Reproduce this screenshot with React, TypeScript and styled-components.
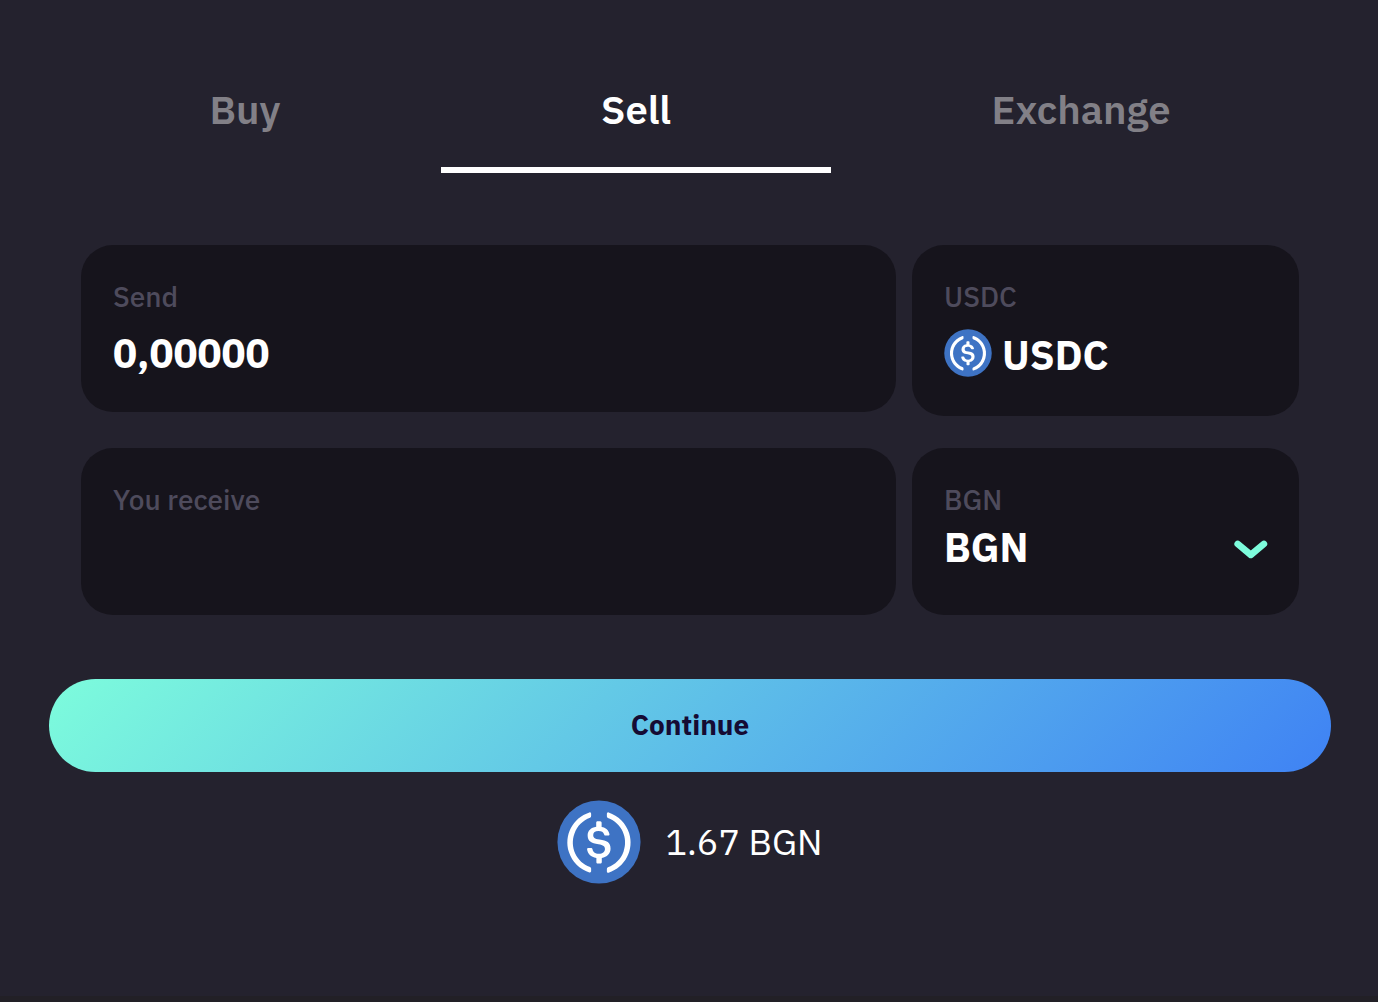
import React, { useState } from "react";
import styled, { createGlobalStyle } from "styled-components";

const GlobalStyle = createGlobalStyle`
  *, *::before, *::after { box-sizing: border-box; }
  html, #root { height: 100%; }
  body {
    height: 100%;
    margin: 0;
    background: #24222e;
    color: #ffffff;
    font-family: "IBM Plex Sans", "Noto Sans", sans-serif;
  }
  button, input, select { font-family: inherit; }
`;

const Page = styled.main`
  display: flex;
  flex-direction: column;
  min-height: 100%;
  padding: 52px 47px 0 49px;
  border-bottom: 6px solid #222026;
`;

const Tabs = styled.div`
  display: grid;
  grid-template-columns: 392fr 390fr 500fr;
`;

const Tab = styled.button<{ $active: boolean }>`
  height: 121px;
  padding: 0 0 2px;
  border: 0;
  border-bottom: 6px solid ${(p) => (p.$active ? "#ffffff" : "transparent")};
  background: none;
  color: ${(p) => (p.$active ? "#ffffff" : "#828087")};
  font-size: 40px;
  font-weight: 600;
  line-height: 56px;
  cursor: pointer;
`;

const Form = styled.form`
  display: flex;
  flex-direction: column;
`;

const Fields = styled.div`
  display: flex;
  flex-direction: column;
  gap: 32px;
  padding: 72px 32px 64px;
`;

const Row = styled.div`
  display: grid;
  grid-template-columns: 815fr 387fr;
  align-items: start;
  gap: 16px;
`;

const Card = styled.div`
  display: flex;
  flex-direction: column;
  min-height: 167px;
  padding: 32px 32px 31px;
  border-radius: 32px;
  background: #16141c;
`;

const Label = styled.label`
  color: #4e4b5c;
  font-size: 28px;
  font-weight: 500;
  line-height: 40px;
`;

const Amount = styled.input`
  width: 100%;
  height: 56px;
  margin-top: 8px;
  padding: 0;
  border: 0;
  outline: 0;
  background: transparent;
  color: #ffffff;
  font-size: 40px;
  font-weight: 700;
  line-height: 56px;
`;

const Asset = styled.output`
  display: flex;
  align-items: flex-start;
  gap: 10px;
  height: 56px;
  margin-top: 12px;
  font-size: 40px;
  font-weight: 700;
  line-height: 52px;
`;

const SelectBox = styled.div`
  display: grid;
  align-items: center;
  height: 56px;
`;

const Select = styled.select`
  grid-area: 1 / 1;
  width: 100%;
  padding: 0 0 2px;
  border: 0;
  outline: 0;
  appearance: none;
  background: transparent;
  color: #ffffff;
  font-size: 40px;
  font-weight: 700;
  line-height: 52px;
`;

const Chevron = styled.svg`
  grid-area: 1 / 1;
  justify-self: end;
  overflow: visible;
  pointer-events: none;
`;

const Continue = styled.button`
  height: 93px;
  padding: 0 0 2px;
  border: 0;
  border-radius: 48px;
  background: linear-gradient(135deg, #7dfcdc 0%, #3f82f4 100%);
  color: #150b33;
  font-size: 28px;
  font-weight: 700;
  cursor: pointer;
`;

const Rate = styled.p`
  display: flex;
  justify-content: center;
  align-items: center;
  gap: 24px;
  margin: 28px 0 0;
  font-size: 36px;
  font-weight: 400;
  line-height: 56px;
`;

function UsdcLogo({ size }: { size: number }) {
  return (
    <svg width={size} height={size} viewBox="0 0 2000 2000" aria-hidden="true">
      <circle cx="1000" cy="1000" r="990" fill="#3e73c4" />
      <path
        fill="#fff"
        d="M1275 1158.33c0-145.83-87.5-195.83-262.5-216.66-125-16.67-150-50-150-108.34s41.67-95.83 125-95.83c75 0 116.67 25 137.5 87.5 4.17 12.5 16.67 20.83 29.17 20.83h66.66c16.67 0 29.17-12.5 29.17-29.16v-4.17c-16.67-91.67-91.67-162.5-187.5-170.83v-100c0-16.67-12.5-29.17-33.33-33.34h-62.5c-16.67 0-29.17 12.5-33.34 33.34v95.83c-125 16.67-204.16 100-204.16 204.17 0 137.5 83.33 191.66 258.33 212.5 116.67 20.83 154.17 45.83 154.17 112.5s-58.34 112.5-137.5 112.5c-108.34 0-145.84-45.84-158.34-108.34-4.16-16.66-16.66-25-29.16-25h-70.84c-16.66 0-29.16 12.5-29.16 29.17v4.17c16.66 104.16 83.33 179.16 220.83 200v100c0 16.66 12.5 29.16 33.33 33.33h62.5c16.67 0 29.17-12.5 33.34-33.33v-100c125-20.84 208.33-108.34 208.33-220.84z"
      />
      <path
        fill="#fff"
        d="M787.5 1595.83c-325-116.66-491.67-479.16-370.83-800 62.5-175 200-308.33 370.83-370.83 16.67-8.33 25-20.83 25-41.67V325c0-16.67-8.33-29.17-25-33.33-4.17 0-12.5 0-16.67 4.16-395.83 125-612.5 545.84-487.5 941.67 75 233.33 254.17 412.5 487.5 487.5 16.67 8.33 33.34 0 37.5-16.67 4.17-4.16 4.17-8.33 4.17-16.66v-58.34c0-12.5-12.5-29.16-25-37.5zM1229.17 295.83c-16.67-8.33-33.34 0-37.5 16.67-4.17 4.17-4.17 8.33-4.17 16.67v58.33c0 16.67 12.5 33.33 25 41.67 325 116.66 491.67 479.16 370.83 800-62.5 175-200 308.33-370.83 370.83-16.67 8.33-25 20.83-25 41.67V1700c0 16.67 8.33 29.17 25 33.33 4.17 0 12.5 0 16.67-4.16 395.83-125 612.5-545.84 487.5-941.67-75-237.5-258.34-416.67-487.5-491.67z"
      />
    </svg>
  );
}

const TABS = ["Buy", "Sell", "Exchange"];

export default function App() {
  const [tab, setTab] = useState("Sell");
  const [send, setSend] = useState("0,00000");

  return (
    <>
      <GlobalStyle />
      <Page>
        <Tabs role="tablist">
          {TABS.map((name) => (
            <Tab
              key={name}
              type="button"
              role="tab"
              aria-selected={tab === name}
              $active={tab === name}
              onClick={() => setTab(name)}
            >
              {name}
            </Tab>
          ))}
        </Tabs>
        <Form onSubmit={(e) => e.preventDefault()}>
          <Fields>
            <Row>
              <Card>
                <Label htmlFor="send">Send</Label>
                <Amount id="send" value={send} onChange={(e) => setSend(e.target.value)} />
              </Card>
              <Card>
                <Label htmlFor="asset">USDC</Label>
                <Asset id="asset">
                  <UsdcLogo size={48} />
                  USDC
                </Asset>
              </Card>
            </Row>
            <Row>
              <Card>
                <Label htmlFor="receive">You receive</Label>
                <Amount id="receive" readOnly value="" />
              </Card>
              <Card>
                <Label htmlFor="currency">BGN</Label>
                <SelectBox>
                  <Select id="currency" defaultValue="BGN">
                    <option>BGN</option>
                  </Select>
                  <Chevron width="34" height="24" viewBox="0 0 34 24" aria-hidden="true">
                    <path
                      d="M4.8 8 L17.8 18.8 L30.8 8"
                      fill="none"
                      stroke="#7dfcdc"
                      strokeWidth="6.8"
                      strokeLinecap="round"
                      strokeLinejoin="round"
                    />
                  </Chevron>
                </SelectBox>
              </Card>
            </Row>
          </Fields>
          <Continue type="submit">Continue</Continue>
        </Form>
        <Rate>
          <UsdcLogo size={84} />
          1.67 BGN
        </Rate>
      </Page>
    </>
  );
}
